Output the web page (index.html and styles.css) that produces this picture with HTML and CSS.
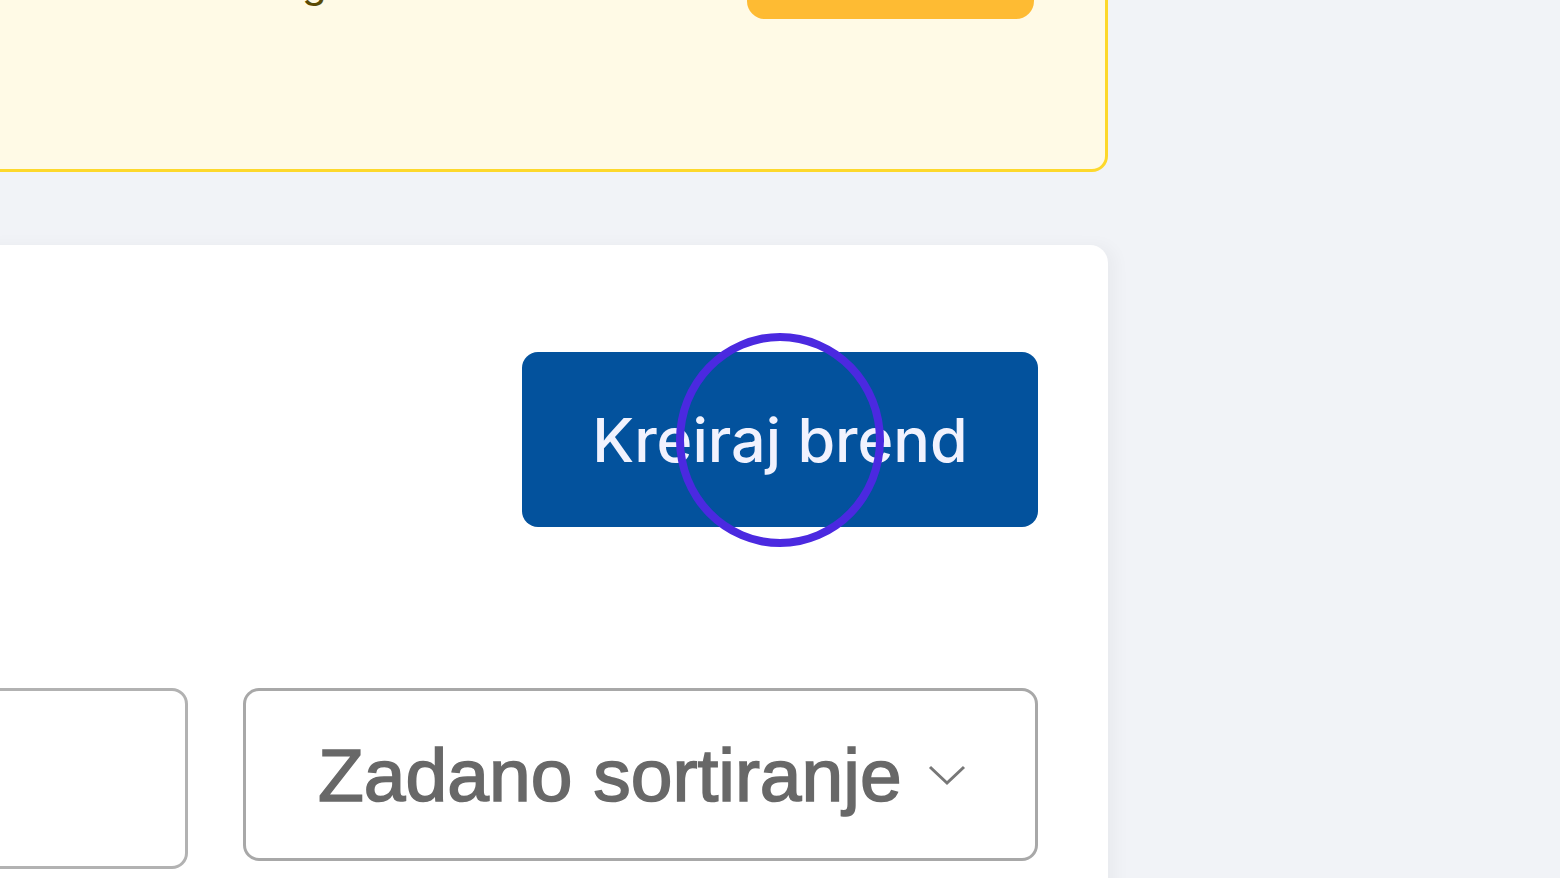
FILE: index.html
```html
<!DOCTYPE html>
<html lang="hr">
<head>
    <meta charset="UTF-8">
    <meta name="viewport" content="width=device-width, initial-scale=1.0">
    <title>Brendovi</title>
    <link rel="stylesheet" href="styles.css">
</head>
<body>

    <div class="page">
        <div class="notice">
            <p class="notice-text">Nadogradite račun</p>
            <button class="btn-upgrade">Nadogradi</button>
        </div>

        <div class="card">
            <div class="card-actions">
                <button class="btn-create">
                    Kreiraj brend
                    <span class="click-ring"></span>
                </button>
            </div>

            <div class="filters">
                <input type="text" class="search" placeholder="">
                <div class="sort">
                    <span>Zadano sortiranje</span>
                    <svg class="chevron" viewBox="0 0 40 24" width="40" height="24">
                        <path d="M3 3 L20 19 L37 3" fill="none" stroke="#777" stroke-width="3"/>
                    </svg>
                </div>
            </div>
        </div>
    </div>

</body>
</html>
```

FILE: styles.css
```css
body {
    margin: 0;
    background-color: #f1f3f7;
    font-family: Inter, 'Noto Sans', sans-serif;
    overflow: hidden;
    height: 878px;
}
.page {
    margin-left: -40px;
    width: 1148px;
}
.notice {
    margin-top: -114px;
    padding: 50px 71px 150px 238px;
    display: flex;
    justify-content: space-between;
    align-items: flex-end;
    background-color: #fffae6;
    border: 3px solid #fdd82c;
    border-radius: 16px;
}
.notice-text {
    margin: 0 0 12px 0;
    font-size: 40px;
    line-height: 48px;
    white-space: nowrap;
    color: #5a4a05;
}
.btn-upgrade {
    flex-shrink: 0;
    width: 287px;
    height: 80px;
    border: none;
    border-radius: 18px;
    background-color: #febb33;
    color: #3a2a00;
    font-size: 30px;
    font-family: Inter, sans-serif;
}
.card {
    margin-top: 73px;
    padding: 107px 70px 0 0;
    height: 600px;
    background-color: #ffffff;
    border-radius: 18px;
    box-shadow: 8px 0 16px rgba(0,0,0,0.035);
}
.card-actions {
    display: flex;
    justify-content: flex-end;
}
.btn-create {
    position: relative;
    width: 516px;
    height: 175px;
    border: none;
    border-radius: 16px;
    background-color: #03529d;
    color: #f1f2fe;
    font-family: Inter, sans-serif;
    font-size: 61px;
    font-weight: 500;
    padding: 0;
}
.click-ring {
    position: absolute;
    left: 50%;
    top: 50%;
    width: 192px;
    height: 198px;
    margin: -107px 0 0 -104px;
    border: 8px solid #4b29e0;
    border-radius: 50%;
}
.filters {
    margin-top: 161px;
    display: flex;
    align-items: flex-start;
    gap: 55px;
}
.search {
    flex: 1;
    min-width: 0;
    height: 181px;
    box-sizing: border-box;
    border: 3px solid #b2b2b2;
    border-radius: 16px;
}
.sort {
    flex-shrink: 0;
    width: 795px;
    height: 173px;
    box-sizing: border-box;
    border: 3px solid #a8a8a8;
    border-radius: 16px;
    padding: 0 68px 0 72px;
    display: flex;
    align-items: center;
    justify-content: space-between;
    white-space: nowrap;
    font-family: 'Liberation Sans', Arial, sans-serif;
    font-size: 75px;
    color: #686868;
    -webkit-text-stroke: 1.6px #686868;
}
.chevron {
    margin-top: 2px;
}
```
